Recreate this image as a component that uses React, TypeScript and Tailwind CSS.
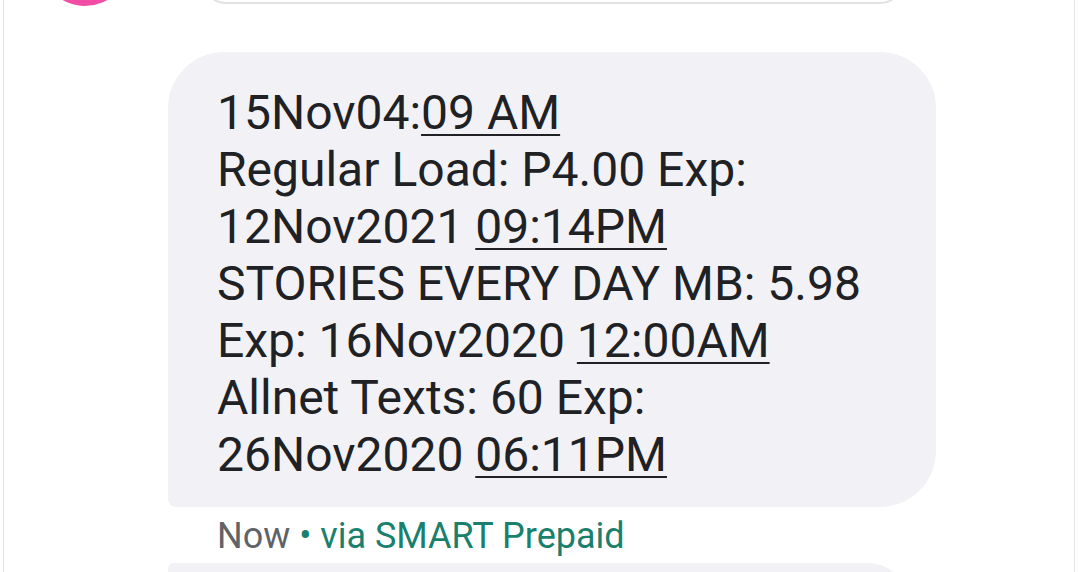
import React from "react";

const U = ({ children }: { children: React.ReactNode }) => (
  <span className="underline decoration-[2px] underline-offset-[5px]">{children}</span>
);

export default function App() {
  return (
    <div
      className="w-[1079px] h-[572px] overflow-hidden bg-white"
      style={{ fontFamily: "Roboto, 'Noto Sans', Arial, sans-serif" }}
    >
      <div className="relative h-full ml-[3px] mr-[4px] border-x border-[#e4e4e8] bg-white">
        {/* avatar remnant */}
        <div className="absolute left-[36px] top-[-84px] w-[90px] h-[90px] rounded-full bg-[#f24ca4]" />
        {/* previous bubble remnant */}
        <div className="absolute left-[198px] right-[170px] top-[-56px] h-[60px] rounded-[24px] border-2 border-[#e2e2e6] bg-white" />

        <div className="pl-[164px] pt-[52px]">
          <div className="w-[768px] rounded-[56px] rounded-bl-[8px] bg-[#f2f2f6] pl-[49px] pt-[32px] pb-[24px] text-[48px] leading-[57px] text-[#202124]">
            <div>
              15Nov04:<U>09 AM</U>
            </div>
            <div>Regular Load: P4.00 Exp:</div>
            <div>
              12Nov2021 <U>09:14PM</U>
            </div>
            <div>STORIES EVERY DAY MB: 5.98</div>
            <div>
              Exp: 16Nov2020 <U>12:00AM</U>
            </div>
            <div>Allnet Texts: 60 Exp:</div>
            <div>
              26Nov2020 <U>06:11PM</U>
            </div>
          </div>
          <div className="mt-[9px] pl-[49px] text-[36px] leading-[40px]">
            <span className="text-[#5f6368]">Now</span>
            <span className="text-[#1a7f6d]"> • via SMART Prepaid</span>
          </div>
          <div className="mt-[7px] w-[740px] h-[80px] rounded-[56px] rounded-tl-[8px] bg-[#f2f2f6]" />
        </div>
      </div>
    </div>
  );
}
